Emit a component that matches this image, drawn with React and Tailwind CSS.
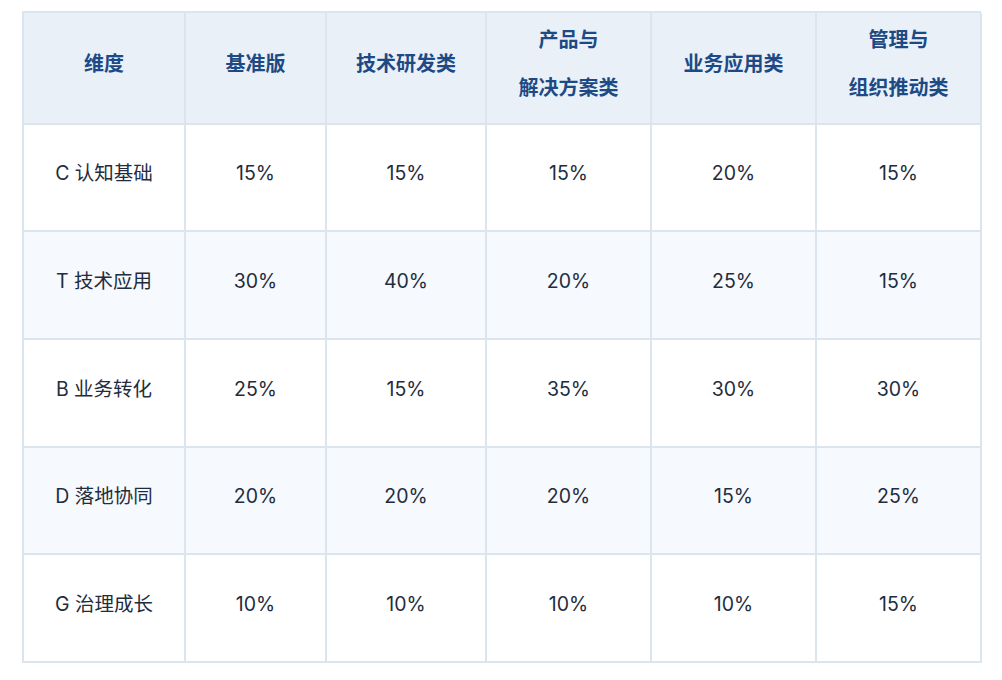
import React from 'react'

const COLS = ['维度', '基准版', '技术研发类', ['产品与', '解决方案类'], '业务应用类', ['管理与', '组织推动类']]

const ROWS = [
  { name: 'C 认知基础', vals: ['15%', '15%', '15%', '20%', '15%'], h: 'h-[107px]' },
  { name: 'T 技术应用', vals: ['30%', '40%', '20%', '25%', '15%'], h: 'h-[108px]' },
  { name: 'B 业务转化', vals: ['25%', '15%', '35%', '30%', '30%'], h: 'h-[108px]' },
  { name: 'D 落地协同', vals: ['20%', '20%', '20%', '15%', '25%'], h: 'h-[107px]' },
  { name: 'G 治理成长', vals: ['10%', '10%', '10%', '10%', '15%'], h: 'h-[108px]' },
]

const GRID = 'grid grid-cols-[162px_141px_160px_165px_165px_165px]'

export default function App() {
  return (
    <div
      className="w-[1002px] h-[680px] bg-white pt-[11px] pl-[22px]"
      style={{ fontFamily: 'Inter, "Noto Sans CJK SC", sans-serif' }}
    >
      <div className="w-[959px] border-t-2 border-l-2 border-[#dce4ee]">
        {/* Header */}
        <div className={`${GRID} h-[112px] bg-[#e9f0f8]`}>
          {COLS.map((c, i) => (
            <div
              key={i}
              className="flex flex-col items-center justify-center pb-[8px] border-r-2 border-b-2 border-[#dce4ee] text-[20px] font-bold leading-[48px] text-[#1d4a85]"
            >
              {Array.isArray(c) ? c.map(l => <span key={l}>{l}</span>) : <span>{c}</span>}
            </div>
          ))}
        </div>

        {/* Body */}
        {ROWS.map((r, ri) => (
          <div key={r.name} className={`${GRID} ${r.h} ${ri % 2 === 1 ? 'bg-[#f6f9fd]' : 'bg-white'}`}>
            <div className="flex items-center justify-center pb-[7px] border-r-2 border-b-2 border-[#dce4ee] text-[19.5px] text-[#1f2d3d]">
              {r.name}
            </div>
            {r.vals.map((v, i) => (
              <div
                key={i}
                className="flex items-center justify-center pb-[7px] border-r-2 border-b-2 border-[#dce4ee] text-[19.5px] text-[#1f2d3d]"
              >
                {v}
              </div>
            ))}
          </div>
        ))}
      </div>
    </div>
  )
}
